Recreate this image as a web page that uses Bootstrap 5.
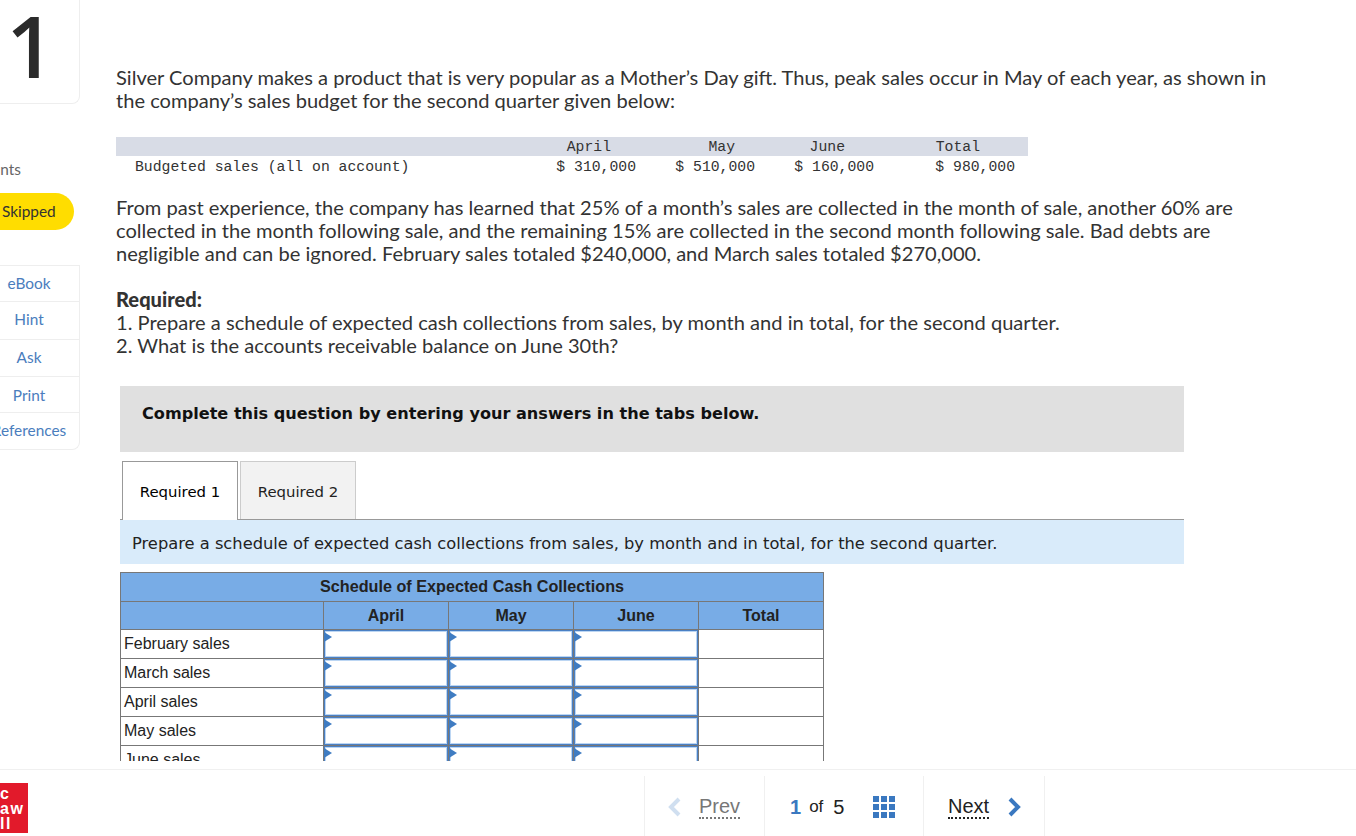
<!DOCTYPE html>
<html lang="en">

<head>
  <meta charset="UTF-8">
  <meta name="viewport" content="width=device-width, initial-scale=1.0">
  <title>Silver Company - Question 1 of 5</title>

  <!-- Bootstrap CSS -->
  <link href="https://cdn.jsdelivr.net/npm/bootstrap@5.3.0/dist/css/bootstrap.min.css" rel="stylesheet">

  <style>
    body {
      height: 836px;
      overflow: hidden;
      font-family: Lato, sans-serif;
      color: #333;
    }

    .work-area {
      height: 761px;
      overflow: hidden;
    }

    /* left rail, cut off by the window edge */
    .side-rail {
      width: 80px;
      flex-shrink: 0;
    }

    .qnum-box {
      height: 104px;
      border: 1px solid #eee;
      border-left: 0;
      border-top: 0;
      border-bottom-right-radius: 8px;
      font-family: "Open Sans", sans-serif;
      font-weight: 600;
      font-size: 85px;
      line-height: 90px;
      color: #2b2b2b;
      text-align: center;
      padding-right: 18px;
    }

    .points-label {
      margin: 55px 0 0 -21px;
      font-size: 15.4px;
      line-height: 20px;
      color: #666;
    }

    .skipped-pill {
      width: 100px;
      height: 37px;
      margin: 14px 0 0 -26px;
      padding-left: 28px;
      border-radius: 19px;
      background: #ffdd00;
      font-size: 15.4px;
      line-height: 36px;
      color: #333;
    }

    .tool-list {
      width: 102px;
      margin: 35px 0 0 -22px;
      border-radius: 0 0 8px 0;
    }

    .tool-list .list-group-item {
      height: 37px;
      padding: 7px 0 0;
      font-size: 15.4px;
      line-height: 20px;
      text-align: center;
      color: #4a7dbd;
      border-color: #eee;
    }

    .tool-list .list-group-item:nth-child(2) { height: 38px; }
    .tool-list .list-group-item:nth-child(4) { height: 36px; padding-top: 8px; }

    /* question column */
    .question-col {
      padding: 66px 0 0 36px;
      min-width: 0;
      flex: 1;
    }

    .q-text {
      width: 1160px;
      margin: 0;
      font-size: 20.1px;
      line-height: 23px;
      color: #333;
    }

    .q-heading {
      font-weight: 900;
    }

    .q-required {
      margin-top: 23px;
    }

    .sales-tbl {
      width: 912px;
      margin: 25px 0 20px;
      font-family: "Liberation Mono", monospace;
      font-size: 14.75px;
      line-height: 18px;
      color: #333;
    }

    .sales-tbl th {
      background: #d8dce6;
      font-weight: 400;
      text-align: right;
      padding: 1px 0 0;
      height: 19px;
    }

    .sales-tbl td {
      text-align: right;
      padding: 2px 0 0;
      height: 20px;
    }

    .sales-tbl td:first-child {
      text-align: left;
      padding-left: 19px;
    }

    .sales-tbl .mon0 { width: 400px; }
    .sales-tbl .mon1 { width: 120px; padding-right: 25px; }
    .sales-tbl .mon2 { width: 119px; padding-right: 20px; }
    .sales-tbl .mon3 { width: 119px; padding-right: 29px; }
    .sales-tbl .mon4 { width: 154px; padding-right: 48px; }
    .sales-tbl td:last-child { padding-right: 13px; }

    .enter-box {
      width: 1064px;
      height: 66px;
      margin: 29px 0 9px 4px;
      padding: 16px 22px 0;
      background: #e0e0e0;
      font-family: "DejaVu Sans", sans-serif;
      font-size: 16.13px;
      font-weight: 700;
      line-height: 24px;
      color: #111;
    }

    .req-tabs {
      width: 1064px;
      margin-left: 4px;
      padding-left: 2px;
      gap: 2px;
      border-bottom: 1px solid #999;
      font-family: "DejaVu Sans", sans-serif;
    }

    .req-tabs .nav-link {
      width: 116px;
      height: 58px;
      margin: 0;
      padding: 20px 0 0;
      border: 1px solid #ccc;
      border-bottom: 0;
      border-radius: 0;
      background: #f2f2f2;
      color: #222;
      font-size: 14.9px;
      line-height: 20px;
      text-align: center;
    }

    .req-tabs .nav-link.active {
      height: 59px;
      margin-bottom: -1px;
      border-color: #999;
      background: #fff;
    }

    .req-strip {
      width: 1064px;
      height: 44px;
      margin: 0 0 8px 4px;
      padding: 13px 12px 0;
      background: #d9ebfa;
      font-family: "DejaVu Sans", sans-serif;
      font-size: 16.3px;
      line-height: 22px;
      color: #222;
    }

    .cash-tbl {
      width: 704px;
      margin-left: 4px;
      table-layout: fixed;
      border-collapse: collapse;
      font-family: "Liberation Sans", sans-serif;
      font-size: 16px;
      color: #222;
    }

    .cash-tbl th,
    .cash-tbl td {
      height: 29px;
      padding: 0;
      border: 1px solid #777;
      line-height: 20px;
    }

    .cash-tbl th {
      background: #78ace6;
      text-align: center;
      font-weight: 700;
    }

    .cash-tbl .head-title {
      font-size: 16.2px;
      padding-bottom: 2px;
    }

    .cash-tbl .head-months th {
      height: 28px;
    }

    .cash-tbl td.row-name {
      padding: 0 0 0 3px;
    }

    .cash-tbl td.entry-cell {
      position: relative;
      box-shadow: inset 0 0 0 1px #4a80c4, inset 0 0 0 2px #bcd6f3;
    }

    .cash-tbl td.entry-cell::before {
      content: "";
      position: absolute;
      left: 0;
      top: 2px;
      border-left: 8px solid #3f7cc2;
      border-top: 5px solid transparent;
      border-bottom: 5px solid transparent;
    }

    .cash-tbl input {
      display: block;
      width: 100%;
      height: 26px;
      border: 0;
      background: transparent;
    }

    /* bottom bar */
    .bottom-bar {
      height: 67px;
      margin-top: 8px;
      border-top: 1px solid #f0f0f0;
      font-family: "Liberation Sans", sans-serif;
    }

    .brand-mark {
      width: 28px;
      height: 50px;
      margin-top: 13px;
      overflow: hidden;
      background: #e21a2b;
      color: #fff;
      font-size: 16px;
      font-weight: 700;
      letter-spacing: 1.5px;
      line-height: 15px;
      padding-top: 3px;
      white-space: nowrap;
      flex-shrink: 0;
    }

    .brand-mark span {
      display: block;
    }

    .pager {
      margin: 6px 0 0 616px;
      height: 60px;
      border-left: 1px solid #f0f0f0;
    }

    .pager-cell {
      height: 60px;
      padding-top: 2px;
      border-right: 1px solid #f0f0f0;
      font-size: 20px;
      color: #222;
    }

    .prev-cell { width: 120px; padding-left: 23px; gap: 17px; }
    .count-cell { width: 159px; padding-left: 25px; }
    .next-cell { width: 121px; padding-left: 24px; gap: 18px; }

    .pager-link {
      line-height: 21px;
      border-bottom: 2px dotted #222;
    }

    .prev-cell .pager-link {
      color: #777;
      border-bottom-color: #777;
    }

    .count-cur {
      color: #3a78c0;
      font-weight: 700;
      margin-right: 8px;
    }

    .count-of {
      font-size: 17px;
      margin-right: 10px;
    }

    .count-tot {
      margin-right: 29px;
    }
  </style>
</head>

<body>
  <div class="work-area d-flex">
    <aside class="side-rail">
      <div class="qnum-box">1</div>
      <div class="points-label text-nowrap">Points</div>
      <div class="skipped-pill">Skipped</div>
      <div class="list-group tool-list">
        <div class="list-group-item">eBook</div>
        <div class="list-group-item">Hint</div>
        <div class="list-group-item">Ask</div>
        <div class="list-group-item">Print</div>
        <div class="list-group-item text-nowrap">References</div>
      </div>
    </aside>

    <main class="question-col">
      <p class="q-text">Silver Company makes a product that is very popular as a Mother’s Day gift. Thus, peak sales occur in May of each year, as shown in the company’s sales budget for the second quarter given below:</p>

      <table class="sales-tbl">
        <tr>
          <th class="mon0"></th>
          <th class="mon1">April</th>
          <th class="mon2">May</th>
          <th class="mon3">June</th>
          <th class="mon4">Total</th>
        </tr>
        <tr>
          <td>Budgeted sales (all on account)</td>
          <td>$ 310,000</td>
          <td>$ 510,000</td>
          <td>$ 160,000</td>
          <td>$ 980,000</td>
        </tr>
      </table>

      <p class="q-text">From past experience, the company has learned that 25% of a month’s sales are collected in the month of sale, another 60% are collected in the month following sale, and the remaining 15% are collected in the second month following sale. Bad debts are negligible and can be ignored. February sales totaled $240,000, and March sales totaled $270,000.</p>

      <p class="q-text q-required"><span class="q-heading">Required:</span><br>1. Prepare a schedule of expected cash collections from sales, by month and in total, for the second quarter.<br>2. What is the accounts receivable balance on June 30th?</p>

      <div class="enter-box">Complete this question by entering your answers in the tabs below.</div>

      <ul class="nav nav-tabs req-tabs">
        <li class="nav-item"><span class="nav-link active">Required 1</span></li>
        <li class="nav-item"><span class="nav-link">Required 2</span></li>
      </ul>

      <div class="req-strip">Prepare a schedule of expected cash collections from sales, by month and in total, for the second quarter.</div>

      <table class="cash-tbl">
        <colgroup>
          <col style="width: 203px">
          <col span="4" style="width: 125px">
        </colgroup>
        <thead>
          <tr>
            <th class="head-title" colspan="5">Schedule of Expected Cash Collections</th>
          </tr>
          <tr class="head-months">
            <th></th>
            <th>April</th>
            <th>May</th>
            <th>June</th>
            <th>Total</th>
          </tr>
        </thead>
        <tbody id="cashRows"></tbody>
      </table>
    </main>
  </div>

  <footer class="bottom-bar d-flex">
    <div class="brand-mark"><span>c</span><span>aw</span><span>ll</span></div>
    <div class="pager d-flex">
      <div class="pager-cell prev-cell d-flex align-items-center">
        <svg width="14" height="20" viewBox="0 0 14 20"><path d="M11 2 3 10l8 8" fill="none" stroke="#d0dff0" stroke-width="4"/></svg>
        <span class="pager-link">Prev</span>
      </div>
      <div class="pager-cell count-cell d-flex align-items-center">
        <span class="count-cur">1</span><span class="count-of">of</span><span class="count-tot">5</span>
        <svg width="22" height="22" viewBox="0 0 22 22" fill="#3a78c0">
          <rect width="6" height="6"/><rect x="8" width="6" height="6"/><rect x="16" width="6" height="6"/>
          <rect y="8" width="6" height="6"/><rect x="8" y="8" width="6" height="6"/><rect x="16" y="8" width="6" height="6"/>
          <rect y="16" width="6" height="6"/><rect x="8" y="16" width="6" height="6"/><rect x="16" y="16" width="6" height="6"/>
        </svg>
      </div>
      <div class="pager-cell next-cell d-flex align-items-center">
        <span class="pager-link">Next</span>
        <svg width="14" height="20" viewBox="0 0 14 20"><path d="M3 2l8 8-8 8" fill="none" stroke="#3a78c0" stroke-width="4"/></svg>
      </div>
    </div>
  </footer>

  <!-- Bootstrap JS -->
  <script src="https://cdn.jsdelivr.net/npm/bootstrap@5.3.0/dist/js/bootstrap.bundle.min.js"></script>

  <script>
    const rowNames = ['February sales', 'March sales', 'April sales', 'May sales', 'June sales'];
    const cashRows = document.getElementById('cashRows');

    rowNames.forEach((name) => {
      const entry = '<td class="entry-cell"><input type="text"></td>';
      cashRows.innerHTML += `<tr><td class="row-name">${name}</td>${entry.repeat(3)}<td></td></tr>`;
    });
  </script>
</body>

</html>
